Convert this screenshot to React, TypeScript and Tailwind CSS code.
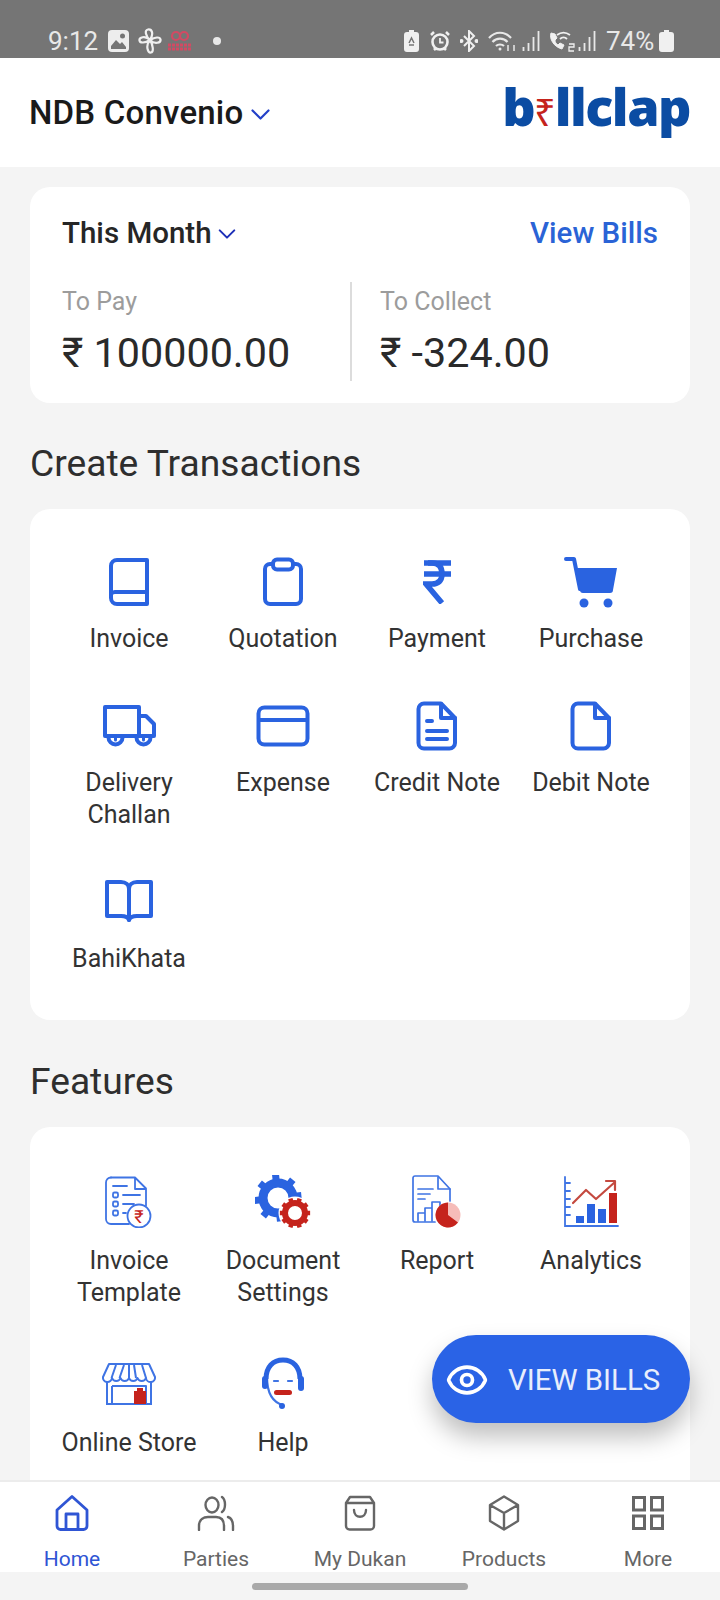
import React from "react";
import { Eye } from "lucide-react";

const B = "#2a63e0";
const BL = "#3f74e4";
const R = "#c5231c";
const s = { fill: "none", stroke: B, strokeLinecap: "round" as const, strokeLinejoin: "round" as const };

const Svg = ({ w, h, vb, children }: { w: number; h: number; vb?: string; children: React.ReactNode }) => (
  <svg width={w} height={h} viewBox={vb ?? `0 0 ${w} ${h}`}>{children}</svg>
);

const BookI = () => (
  <Svg w={42} h={50}>
    <g {...s} strokeWidth={4}>
      <path d="M39 3H9a6 6 0 0 0-6 6v32a6 6 0 0 0 6 6h30z" />
      <path d="M3 37a5 5 0 0 1 5-2h31" />
    </g>
  </Svg>
);
const ClipI = () => (
  <Svg w={42} h={50}>
    <g {...s} strokeWidth={4}>
      <path d="M11 7H8a5 5 0 0 0-5 5v30a5 5 0 0 0 5 5h26a5 5 0 0 0 5-5V12a5 5 0 0 0-5-5h-3" />
      <rect x="11" y="2.5" width="20" height="10" rx="4" />
    </g>
  </Svg>
);
const RupeeI = () => (
  <Svg w={28} h={44}>
    <g {...s} strokeWidth={5.5} strokeLinecap="butt">
      <path d="M1 3h27M1 14h27" />
      <path d="M5 3h4c7 0 10 4 10 11s-4 10-10 10H3l16 19" strokeLinejoin="miter" />
    </g>
  </Svg>
);
const CartI = () => (
  <Svg w={54} h={52}>
    <path d="M2 3h8l6 30" fill="none" stroke={B} strokeWidth={4} strokeLinecap="round" strokeLinejoin="round" />
    <path d="M12 12h41l-4 22a3 3 0 0 1-3 3H19a3 3 0 0 1-3-3z" fill={B} />
    <circle cx="20" cy="47" r="4.5" fill={B} />
    <circle cx="44" cy="47" r="4.5" fill={B} />
  </Svg>
);
const TruckI = () => (
  <Svg w={54} h={44}>
    <g {...s} strokeWidth={4}>
      <path d="M3 3h34v29H3z" />
      <path d="M37 12h7l8 8v12H37" />
      <path d="M6.500 33.500a7 7 0 0 0 14 0M34.500 33.500a7 7 0 0 0 14 0" />
      <path d="M13.500 33v3M41.500 33v3" strokeWidth={3} />
    </g>
  </Svg>
);
const CardI = () => (
  <Svg w={54} h={42}>
    <g {...s} strokeWidth={4}>
      <rect x="2.5" y="2.5" width="49" height="37" rx="6" />
      <path d="M3 15h48" />
    </g>
  </Svg>
);
const DocLinesI = ({ lines }: { lines?: boolean }) => (
  <Svg w={42} h={50}>
    <g {...s} strokeWidth={4}>
      <path d="M8 2.500h17L39 17v25a5.500 5.500 0 0 1-5.500 5.500H8A5.500 5.500 0 0 1 2.500 42V8A5.500 5.500 0 0 1 8 2.500z" />
      <path d="M25 3v14h14" />
      {lines && <path d="M11 20h5M11 30h20M11 38h20" />}
    </g>
  </Svg>
);
const OpenBookI = () => (
  <Svg w={50} h={46}>
    <g {...s} strokeWidth={4}>
      <path d="M3 3h14c5 0 8 3 8 7v31c-1-3-4-4-8-4H3z" />
      <path d="M47 3H33c-5 0-8 3-8 7v31c1-3 4-4 8-4h14z" />
    </g>
  </Svg>
);

const TemplateI = () => (
  <Svg w={48} h={52}>
    <g fill="none" stroke={BL} strokeWidth={1.800} strokeLinecap="round" strokeLinejoin="round">
      <path d="M6 1.500h24l11 11v17M30 2v11h11" />
      <path d="M24 48H6a5 5 0 0 1-5-5V6.500a5 5 0 0 1 5-5" />
      <path d="M8 10h14M18 19h17M18 28h11M18 37h3" />
      <rect x="8" y="16.500" width="5" height="5" rx="1.500" />
      <rect x="8" y="25.500" width="5" height="5" rx="1.500" />
      <rect x="8" y="34.500" width="5" height="5" rx="1.500" />
      <circle cx="34" cy="40" r="11.500" />
    </g>
    <text x="34" y="47" textAnchor="middle" fontSize="18" fill={R} fontFamily="Roboto, sans-serif">₹</text>
  </Svg>
);
const gearPath = (cx: number, cy: number, r: number, n: number) => {
  const out: string[] = [];
  for (let i = 0; i < n; i++) {
    const a = (i / n) * Math.PI * 2;
    const x1 = cx + Math.cos(a) * r * 0.82;
    const y1 = cy + Math.sin(a) * r * 0.82;
    const x2 = cx + Math.cos(a) * r * 1.12;
    const y2 = cy + Math.sin(a) * r * 1.12;
    out.push(`M${x1} ${y1}L${x2} ${y2}`);
  }
  return out.join("");
};
const GearsI = () => (
  <Svg w={56} h={54}>
    <circle cx="23" cy="23" r="15" fill="none" stroke={B} strokeWidth={9} />
    <path d={gearPath(23, 23, 21, 8)} stroke={B} strokeWidth={7} transform="rotate(-6 23 23)" />
    <circle cx="40" cy="38" r="16.500" fill="#fff" />
    <circle cx="40" cy="38" r="10" fill="none" stroke={R} strokeWidth={6} />
    <path d={gearPath(40, 38, 13.500, 10)} stroke={R} strokeWidth={4.500} />
  </Svg>
);
const ReportI = () => (
  <Svg w={50} h={54}>
    <g fill="none" stroke={BL} strokeWidth={1.700} strokeLinejoin="round" strokeLinecap="round">
      <path d="M23 47H3a2 2 0 0 1-2-2V3a2 2 0 0 1 2-2h23l12 13v12" />
      <path d="M26 2v12h12M6 14h15M6 19h12M6 24h7" />
      <path d="M6 46v-8h7v8M13 46V33h7v13M20 46V27h8v11" />
    </g>
    <circle cx="36" cy="40" r="12.500" fill="#f6bcb9" />
    <path d="M36 27.500a12.500 12.500 0 1 0 10 20L36 40z" fill={R} />
  </Svg>
);
const AnalyticsI = () => (
  <Svg w={56} h={52}>
    <g stroke={BL} strokeWidth={1.800} fill="none" strokeLinecap="round">
      <path d="M2 1v49h53M2 7h5M2 15h5M2 23h5M2 31h5M2 39h5" />
    </g>
    <path d="M10 27l13-13 10 9 19-17M43 5h9v9" fill="none" stroke="#c4493f" strokeWidth={2.200} strokeLinejoin="round" strokeLinecap="round" />
    <rect x="13" y="40" width="8" height="7" fill={B} />
    <rect x="24" y="28" width="8" height="19" fill={B} />
    <rect x="35" y="33" width="8" height="14" fill={B} />
    <rect x="46" y="17" width="8" height="30" fill={R} />
  </Svg>
);
const StoreI = () => (
  <Svg w={54} h={44}>
    <g fill="none" stroke={BL} strokeWidth={2} strokeLinejoin="round">
      <path d="M7 2h40l6 13a4.500 4.500 0 0 1-9 1 4.500 4.500 0 0 1-8.500 0 4.500 4.500 0 0 1-8.500 0 4.500 4.500 0 0 1-8.500 0 4.500 4.500 0 0 1-8.500 0 4.500 4.500 0 0 1-9-1z" />
      <path d="M14 3l-4.500 13M22 3l-4.500 13M32 3l2 13M40 3l4 13M27 3v13" />
      <path d="M4 42h46M5 19v23M49 19v23M10 24h34v18M10 24v18" />
    </g>
    <rect x="32" y="29" width="12" height="13" fill={R} />
    <rect x="35" y="26" width="6" height="3" fill={R} />
  </Svg>
);
const HelpI = () => (
  <Svg w={44} h={54}>
    <path d="M5 22C5 10 12 3 22 3s17 7 17 19" fill="none" stroke={B} strokeWidth={5} />
    <path d="M6 20c0 8 1 24 16 28" fill="none" stroke={BL} strokeWidth={2.200} />
    <rect x="1" y="19" width="6" height="13" rx="3" fill={B} />
    <rect x="37" y="19" width="6" height="15" rx="3" fill={B} />
    <circle cx="21" cy="49" r="3" fill={B} />
    <path d="M13 24h4M27 24h4" stroke={BL} strokeWidth={2.200} strokeLinecap="round" />
    <rect x="13" y="33" width="18" height="5" rx="2.500" fill={R} />
  </Svg>
);

type Item = { icon: React.ReactNode; label: string[] };
const transactions: Item[] = [
  { icon: <BookI />, label: ["Invoice"] },
  { icon: <ClipI />, label: ["Quotation"] },
  { icon: <RupeeI />, label: ["Payment"] },
  { icon: <CartI />, label: ["Purchase"] },
  { icon: <TruckI />, label: ["Delivery", "Challan"] },
  { icon: <CardI />, label: ["Expense"] },
  { icon: <DocLinesI lines />, label: ["Credit Note"] },
  { icon: <DocLinesI />, label: ["Debit Note"] },
  { icon: <OpenBookI />, label: ["BahiKhata"] },
];
const features: Item[] = [
  { icon: <TemplateI />, label: ["Invoice", "Template"] },
  { icon: <GearsI />, label: ["Document", "Settings"] },
  { icon: <ReportI />, label: ["Report"] },
  { icon: <AnalyticsI />, label: ["Analytics"] },
  { icon: <StoreI />, label: ["Online Store"] },
  { icon: <HelpI />, label: ["Help"] },
];

const Tile = ({ item, mt }: { item: Item; mt: string }) => (
  <div className="flex flex-col items-center">
    <div className="flex h-[56px] items-center justify-center">{item.icon}</div>
    <div className={`${mt} text-center text-[25px] leading-[32px] text-[#333333]`}>
      {item.label.map((l) => (
        <div key={l} className="whitespace-nowrap">{l}</div>
      ))}
    </div>
  </div>
);

const Chevron = ({ w = 19, h = 11, c = "#2340c8" }: { w?: number; h?: number; c?: string }) => (
  <svg width={w} height={h} viewBox="0 0 19 11">
    <path d="M1.500 1.500l8 8 8-8" fill="none" stroke={c} strokeWidth={2.200} strokeLinecap="round" strokeLinejoin="round" />
  </svg>
);

const Signal = () => (
  <svg width="19" height="22" viewBox="0 0 19 22">
    <path d="M1.500 21v-4M6.500 21v-8M11.500 21V7M16.500 21V1" stroke="#e8e8e8" strokeWidth={1.800} />
  </svg>
);
const WifiArcs = ({ w }: { w: number }) => (
  <svg width={w} height="22" viewBox={`0 0 ${w} 22`} fill="none" stroke="#e8e8e8" strokeWidth={2.200}>
    <path d="M1 8c6-7 16-7 22 0M4.500 12c4-4.500 11-4.500 15 0M8 16c2-2 6-2 8 0" />
    <circle cx="12" cy="19" r="1.500" fill="#e8e8e8" stroke="none" />
    <path d="M20 21v-6M26 21v-6" strokeWidth={1.500} />
  </svg>
);

const StatusBar = () => (
  <div className="flex h-[58px] items-center bg-[#757575] pl-[48px] pr-[46px] pt-[23px] text-[26px] text-[#e8e8e8]">
    <span className="w-[50px] leading-none">9:12</span>
    <svg className="ml-[10px]" width="21" height="22" viewBox="0 0 21 22">
      <rect x="0" y="0" width="21" height="22" rx="4" fill="#ededed" />
      <circle cx="14.500" cy="6" r="2.500" fill="#757575" />
      <path d="M3 16l5-6 4 4 2-2 4 5v2H3z" fill="#757575" />
    </svg>
    <svg className="ml-[9px]" width="24" height="26" viewBox="0 0 24 26" fill="none" stroke="#f0f0f0" strokeWidth={2.200}>
      <path d="M12 12C8 9 6 2 10 1.500s6 4 2 10.500zM12 12c5-3 10-3.500 10.500-.5S17 17 12 12zM12 12c3 5 4 12 1 12.500S7 18 12 12zM12 12C7 15 2 15.500 1.500 12.500S7 7 12 12z" />
    </svg>
    <svg className="ml-[6px]" width="24" height="22" viewBox="0 0 24 22" fill="none" stroke="#d24a63" strokeWidth={2.200}>
      <circle cx="8" cy="6" r="4" />
      <circle cx="16" cy="6" r="4" />
      <path d="M0 15h24M0 19h24" strokeDasharray="3 1" strokeWidth={3} />
    </svg>
    <span className="ml-[21px] h-[8px] w-[8px] rounded-full bg-[#e8e8e8]" />
    <div className="flex-1" />
    <svg width="15" height="22" viewBox="0 0 15 22">
      <path d="M5 0h5v2h2a3 3 0 0 1 3 3v14a3 3 0 0 1-3 3H3a3 3 0 0 1-3-3V5a3 3 0 0 1 3-3h2z" fill="#f0f0f0" />
      <path d="M5 13l2.500-5 2.500 5M5 15h5" stroke="#757575" strokeWidth={1.500} fill="none" />
    </svg>
    <svg className="ml-[11px]" width="20" height="22" viewBox="0 0 20 22" fill="none" stroke="#f0f0f0">
      <circle cx="10" cy="12" r="7.500" strokeWidth={2.600} />
      <path d="M10 8v4.500h3.500" strokeWidth={1.800} />
      <path d="M1 5l3-3M19 5l-3-3M4 20l2-2M16 20l-2-2" strokeWidth={2.500} />
    </svg>
    <svg className="ml-[10px]" width="18" height="22" viewBox="0 0 18 22" fill="none" stroke="#f0f0f0" strokeWidth={2}>
      <path d="M4 6l10 10-5 5V1l5 5L4 16" />
      <circle cx="1.500" cy="11" r="1" fill="#f0f0f0" />
      <circle cx="16.500" cy="11" r="1" fill="#f0f0f0" />
    </svg>
    <div className="ml-[10px]"><WifiArcs w={28} /></div>
    <div className="ml-[6px]"><Signal /></div>
    <svg className="ml-[7px]" width="29" height="22" viewBox="0 0 29 22" fill="none" stroke="#f0f0f0">
      <path d="M3 3c-2 6 3 14 11 16l2-4-4-2-2 2c-2-1-3-3-3-5l2-2-2-4z" fill="#f0f0f0" strokeWidth={1} />
      <path d="M9 5c4-3 9-3 13 0M12 9c2-2 5-2 7 0" strokeWidth={1.800} />
      <path d="M21 14h5v3h-5v4h5" strokeWidth={1.300} />
    </svg>
    <div className="ml-[1px]"><Signal /></div>
    <span className="ml-[9px] w-[48px] leading-none">74%</span>
    <svg className="ml-[5px]" width="15" height="22" viewBox="0 0 15 22">
      <path d="M5 0h5v2h2a3 3 0 0 1 3 3v14a3 3 0 0 1-3 3H3a3 3 0 0 1-3-3V5a3 3 0 0 1 3-3h2z" fill="#f0f0f0" />
    </svg>
  </div>
);

const navIcon = { fill: "none", stroke: "#666", strokeWidth: 2.400, strokeLinecap: "round" as const, strokeLinejoin: "round" as const };
const nav = [
  {
    label: "Home",
    icon: (
      <svg width="34" height="36" viewBox="0 0 34 36" fill="none" stroke="#2f55d4" strokeWidth={2.800} strokeLinejoin="round">
        <path d="M17 1.500L2 15v16a3.500 3.500 0 0 0 3.500 3.500h23a3.500 3.500 0 0 0 3.500-3.500V15z" />
        <path d="M11 34V19h12v15" />
      </svg>
    ),
  },
  {
    label: "Parties",
    icon: (
      <svg width="38" height="36" viewBox="0 0 38 36" {...navIcon}>
        <ellipse cx="15" cy="10" rx="6.500" ry="7.500" />
        <path d="M25 2c4 3 4 12 0 15M2 35v-4c0-7 5-9 9-9h8c4 0 8 2 8 9v4M31 22c3 1 5 4 5 9v4" />
      </svg>
    ),
  },
  {
    label: "My Dukan",
    icon: (
      <svg width="32" height="36" viewBox="0 0 32 36" {...navIcon}>
        <path d="M6 2h20l4 6v23a3.500 3.500 0 0 1-3.500 3.500h-21A3.500 3.500 0 0 1 2 31V8zM2 8h28" />
        <path d="M10 15c0 9 12 9 12 0" />
      </svg>
    ),
  },
  {
    label: "Products",
    icon: (
      <svg width="32" height="36" viewBox="0 0 32 36" {...navIcon}>
        <path d="M16 1.500L2 10v16l14 8.500L30 26V10zM2 10l14 8 14-8M16 18v16" />
      </svg>
    ),
  },
  {
    label: "More",
    icon: (
      <svg width="32" height="34" viewBox="0 0 32 34" fill="none" stroke="#666" strokeWidth={3}>
        <rect x="1.500" y="1.500" width="11" height="12.500" />
        <rect x="19.500" y="1.500" width="11" height="12.500" />
        <rect x="1.500" y="20" width="11" height="12.500" />
        <rect x="19.500" y="20" width="11" height="12.500" />
      </svg>
    ),
  },
];

export default function App() {
  return (
    <div
      className="relative flex h-[1600px] w-[720px] flex-col overflow-hidden bg-[#f4f4f4]"
      style={{ fontFamily: "Roboto, sans-serif" }}
    >
      <StatusBar />
      <header className="flex h-[109px] items-center justify-between bg-white pl-[29px] pr-[30px]">
        <div className="flex items-center gap-[8px]">
          <span className="text-[33px] font-medium leading-none tracking-[0.2px] text-[#1a1a1a]">NDB Convenio</span>
          <span className="mt-[4px]"><Chevron /></span>
        </div>
        <div
          className="mb-[14px] flex h-[64px] items-baseline text-[52px] font-extrabold leading-[64px] tracking-[-1.500px] text-[#0b4ca3]"
          style={{ fontFamily: "'Open Sans', sans-serif" }}
        >
          <span>b</span>
          <span className="text-[38px] font-normal text-[#c5231c]">₹</span>
          <span>llclap</span>
        </div>
      </header>

      <main className="flex flex-1 flex-col overflow-hidden px-[30px] pt-[20px]">
        <section className="h-[216px] shrink-0 rounded-[20px] bg-white px-[32px] pt-[26px]">
          <div className="flex items-center justify-between">
            <div className="flex items-center gap-[6px]">
              <span className="text-[29.500px] font-medium leading-[40px] text-[#262626]">This Month</span>
              <span className="mt-[2px]"><Chevron w={18} h={10} c="#1c2fb8" /></span>
            </div>
            <span className="text-[29.500px] font-medium leading-[40px] text-[#2a63d6]">View Bills</span>
          </div>
          <div className="mt-[29px] flex">
            <div className="w-[288px] pt-[5px]">
              <div className="text-[25px] leading-[30px] text-[#9c9c9c]">To Pay</div>
              <div className="mt-[11px] text-[41.300px] leading-[50px] text-[#2a2a2a]">₹ 100000.00</div>
            </div>
            <div className="h-[99px] w-[2px] bg-[#dcdcdc]" />
            <div className="pl-[28px] pt-[5px]">
              <div className="text-[25px] leading-[30px] text-[#9c9c9c]">To Collect</div>
              <div className="mt-[11px] text-[41.300px] leading-[50px] text-[#2a2a2a]">₹ -324.00</div>
            </div>
          </div>
        </section>

        <h2 className="mt-[37px] text-[37.200px] font-normal leading-[46px] text-[#2e2e2e]">Create Transactions</h2>
        <section className="mt-[23px] grid h-[511px] shrink-0 grid-cols-4 content-start gap-y-[43px] rounded-[20px] bg-white px-[22px] pt-[45px]">
          {transactions.map((t) => (
            <Tile key={t.label[0]} item={t} mt="mt-[13px]" />
          ))}
        </section>

        <h2 className="mt-[38px] text-[37.200px] font-normal leading-[46px] text-[#2e2e2e]">Features</h2>
        <section className="mt-[23px] grid flex-1 grid-cols-4 content-start gap-y-[47px] rounded-t-[20px] bg-white px-[22px] pt-[47px]">
          {features.map((t) => (
            <Tile key={t.label[0]} item={t} mt="mt-[15px]" />
          ))}
        </section>
      </main>

      <nav className="z-10 grid h-[92px] grid-cols-5 border-t-2 border-[#ececec] bg-white pt-[13px]">
        {nav.map((n, i) => (
          <div key={n.label} className="flex flex-col items-center">
            <div className="flex h-[36px] items-center">{n.icon}</div>
            <span className={`mt-[14px] text-[21px] leading-[28px] ${i === 0 ? "text-[#2f55d4]" : "text-[#666666]"}`}>{n.label}</span>
          </div>
        ))}
      </nav>
      <div className="flex h-[28px] items-start justify-center pt-[11px]">
        <div className="h-[7px] w-[216px] rounded-full bg-[#a9a9a9]" />
      </div>

      <button className="absolute left-[432px] top-[1335px] z-20 flex h-[88px] w-[258px] items-center gap-[19px] rounded-full bg-[#2a63e6] pl-[13px] pt-[2px] text-[29.400px] text-[#e8eefc] shadow-[0_14px_24px_rgba(0,0,0,0.25)]">
        <Eye size={44} strokeWidth={2} color="#fff" />
        VIEW BILLS
      </button>
    </div>
  );
}
